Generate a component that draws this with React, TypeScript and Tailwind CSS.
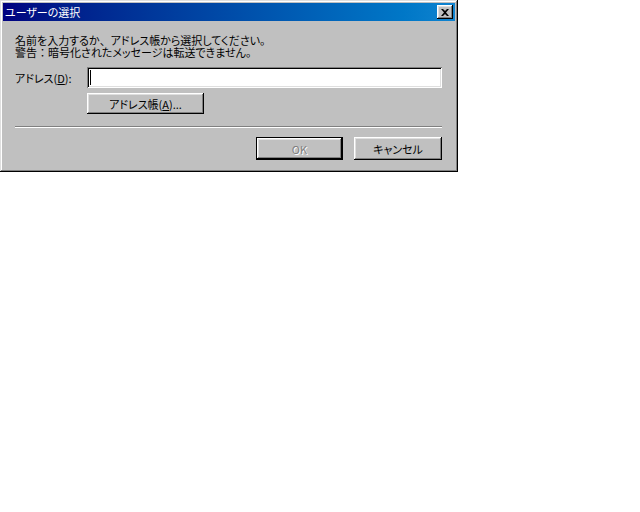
import React from 'react';

const font = "font-['Noto_Sans_CJK_JP','Noto_Sans',sans-serif] [font-feature-settings:'palt']";

const raised =
  'shadow-[inset_-1px_-1px_#000,inset_1px_1px_#fff,inset_-2px_-2px_#808080,inset_2px_2px_#dfdfdf]';

// full-width punctuation, kept at full width like the original dialog font
function P({ children }: { children: React.ReactNode }) {
  return (
    <span className="inline-block h-[12px] leading-[12px] align-top [font-feature-settings:normal]">
      {children}
    </span>
  );
}

function Button({
  children,
  width,
  height = 'h-[23px]',
  disabled,
  isDefault,
}: {
  children: React.ReactNode;
  width: string;
  height?: string;
  disabled?: boolean;
  isDefault?: boolean;
}) {
  if (isDefault) {
    return (
      <div className={`${width} ${height} border border-black`}>
        <div
          className={`w-full h-full bg-[#c0c0c0] ${raised} flex items-center justify-center text-[11px] leading-[12px] ${
            disabled ? 'text-[#808080] [text-shadow:1px_1px_0_#fff]' : 'text-black'
          }`}
        >
          {children}
        </div>
      </div>
    );
  }
  return (
    <div
      className={`${width} ${height} bg-[#c0c0c0] ${raised} flex items-center justify-center text-[11px] leading-[12px] text-black`}
    >
      {children}
    </div>
  );
}

export default function App() {
  return (
    <div className={`w-[640px] h-[512px] bg-white ${font}`}>
      <div className="w-[458px] h-[172px] bg-[#c0c0c0] p-[3px] flex flex-col shadow-[inset_-1px_-1px_#000,inset_1px_1px_#dfdfdf,inset_-2px_-2px_#808080,inset_2px_2px_#fff]">
        {/* Title bar */}
        <div className="h-[18px] flex items-center justify-between pl-[2px] pr-[2px] bg-linear-to-r from-[#000080] to-[#1084d0]">
          <span className="text-white text-[11px] leading-[12px]">ユーザーの選択</span>
          <div className={`w-[16px] h-[14px] bg-[#c0c0c0] ${raised} flex items-center justify-center`}>
            <svg width="8" height="7" viewBox="0 0 8 7">
              <path d="M0 0h2l2 2 2-2h2L5 3.5 8 7H6L4 5 2 7H0l3-3.5z" fill="#000" />
            </svg>
          </div>
        </div>

        {/* Body */}
        <div className="flex flex-col pl-[12px] pr-[13px]">
          <div className="mt-[13px] text-[11px] leading-[12px] text-black">
            <div className="h-[12px]">
              名前を入力するか<P>、</P>アドレス帳から選択してください<P>。</P>
            </div>
            <div className="h-[12px]">
              警告<P>：</P>暗号化されたメッセージは転送できません<P>。</P>
            </div>
          </div>

          <div className="mt-[9px] flex items-center">
            <label className="w-[72px] text-[11px] leading-[12px] text-black">
              アドレス(<span className="underline">D</span>):
            </label>
            <div className="flex-1 h-[21px] bg-white shadow-[inset_1px_1px_#808080,inset_-1px_-1px_#fff,inset_2px_2px_#000,inset_-2px_-2px_#dfdfdf] flex items-center pl-[3px]">
              <div className="w-px h-[15px] bg-black" />
            </div>
          </div>

          <div className="mt-[5px] pl-[72px]">
            <Button width="w-[117px]" height="h-[21px]">
              アドレス帳(<span className="underline">A</span>)...
            </Button>
          </div>

          <div className="mt-[12px] h-[2px] border-t border-[#808080] border-b border-b-white" />

          <div className="mt-[9px] flex justify-end gap-[11px]">
            <Button width="w-[87px]" disabled isDefault>
              OK
            </Button>
            <Button width="w-[88px]">キャンセル</Button>
          </div>
        </div>
      </div>
    </div>
  );
}
